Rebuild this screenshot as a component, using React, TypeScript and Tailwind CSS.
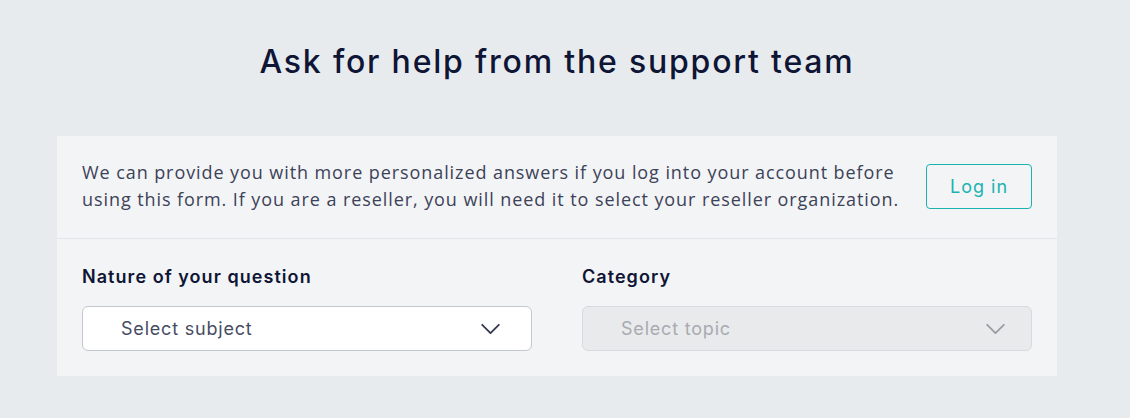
const ChevronDown = ({ className }: { className: string }) => (
  <svg viewBox="0 0 22 13" className={className} fill="none" stroke="currentColor" strokeWidth={2} strokeLinecap="round" strokeLinejoin="round">
    <path d="M2 2l9 9 9-9" />
  </svg>
);

interface SelectBoxProps {
  label: string;
  placeholder: string;
  disabled?: boolean;
}

const SelectBox = ({ label, placeholder, disabled }: SelectBoxProps) => (
  <div className="flex flex-col">
    <label className="text-[18px] font-semibold text-[#0f1535] leading-6 tracking-[1.05px] font-['Inter',sans-serif]">
      {label}
    </label>
    <div
      className={`mt-[17px] h-[45px] rounded-[6px] border flex items-center justify-between pl-[38px] ${
        disabled ? "pr-[25px] bg-[#e9eaec] border-[#d9dadd] text-[#a8abb1]" : "pr-[30px] bg-white border-[#c4c7ce] text-[#464c63]"
      }`}
    >
      <span className="text-[18px] tracking-[0.8px] font-['Inter',sans-serif]">{placeholder}</span>
      <ChevronDown className={`w-[21px] h-[12px] ${disabled ? "text-[#9a9da3]" : "text-[#343b52]"}`} />
    </div>
  </div>
);

export default function App() {
  return (
    <div className="min-h-[418px] bg-[#e8ebee] flex flex-col items-center pt-[40px] pr-[16px]">
      <h1 className="text-[32px] font-medium text-[#0f1535] leading-[44px] tracking-[1.8px] font-['Inter',sans-serif]">
        Ask for help from the support team
      </h1>
      <div className="mt-[52px] w-[1000px] bg-[#f3f4f6]">
        <div className="flex items-center justify-between px-[25px] pt-[23px] pb-[25px] border-b border-[#e3e5e8]">
          <p className="text-[18px] leading-[27px] text-[#3c4258] tracking-[0.92px] font-['Open_Sans',sans-serif] whitespace-nowrap">
            We can provide you with more personalized answers if you log into your account before
            <br />
            using this form. If you are a reseller, you will need it to select your reseller organization.
          </p>
          <button className="w-[106px] h-[45px] border border-[#1ab3b0] rounded-[4px] text-[#1ab3b0] text-[18px] tracking-[1px] font-['Inter',sans-serif]">
            Log in
          </button>
        </div>
        <div className="grid grid-cols-2 gap-[50px] px-[25px] pt-[26px] pb-[25px]">
          <SelectBox label="Nature of your question" placeholder="Select subject" />
          <SelectBox label="Category" placeholder="Select topic" disabled />
        </div>
      </div>
    </div>
  );
}
